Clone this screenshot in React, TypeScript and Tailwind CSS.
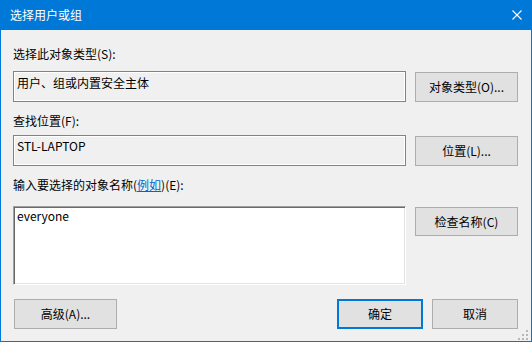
const font = { fontFamily: '"Noto Sans CJK SC", "Noto Sans", sans-serif' };

function Button({
  label,
  className = "",
  primary = false,
}: {
  label: React.ReactNode;
  className?: string;
  primary?: boolean;
}) {
  return (
    <button
      className={`flex items-center justify-center bg-[#e1e1e1] text-[12px] leading-[16px] text-black ${
        primary ? "border-2 border-[#0078d7]" : "border border-[#adadad]"
      } ${className}`}
    >
      {label}
    </button>
  );
}

function Grip() {
  const dots = [
    [8, 0],
    [4, 4],
    [8, 4],
    [0, 8],
    [4, 8],
    [8, 8],
  ];
  return (
    <svg className="absolute right-[3px] bottom-[1px]" width="10" height="10" viewBox="0 0 10 10">
      {dots.map(([x, y]) => (
        <rect key={`${x}-${y}`} x={x} y={y} width="2" height="2" fill="#b8b8b8" />
      ))}
    </svg>
  );
}

export default function App() {
  return (
    <div className="w-[532px] h-[342px] bg-[#0078d7] flex flex-col" style={font}>
      {/* title bar */}
      <div className="h-[30px] flex items-center justify-between pl-[10px] pr-[10px] text-white">
        <span className="text-[12px] leading-[16px]">选择用户或组</span>
        <svg width="10" height="10" viewBox="0 0 10 10" className="mr-[0px]">
          <path d="M0.5 0.5L9.5 9.5M9.5 0.5L0.5 9.5" stroke="#fff" strokeWidth="1.1" />
        </svg>
      </div>

      <div className="relative flex-1 mx-px mb-px bg-[#f0f0f0] pl-[12px] pr-[13px] pt-[16px] text-[12px] leading-[16px] text-black">
        <div className="h-[16px]">选择此对象类型(S):</div>
        <div className="mt-[9px] flex items-start">
          <div className="w-[393px] h-[31px] border border-[#838383] shadow-[inset_0_0_0_1px_#ffffff] pl-[3px] pt-[3px]">
            用户、组或内置安全主体
          </div>
          <Button label="对象类型(O)..." className="ml-[9px] mt-px w-[103px] h-[30px]" />
        </div>

        <div className="mt-[11px] h-[16px]">查找位置(F):</div>
        <div className="mt-[6px] flex items-start">
          <div className="w-[393px] h-[31px] border border-[#838383] shadow-[inset_0_0_0_1px_#ffffff] pl-[3px] pt-[2px]">
            STL-LAPTOP
          </div>
          <Button label="位置(L)..." className="ml-[9px] mt-px w-[103px] h-[30px]" />
        </div>

        <div className="mt-[11px] h-[16px]">
          输入要选择的对象名称(<span className="text-[#0066cc] underline">例如</span>)(E):
        </div>
        <div className="mt-[13px] flex items-start">
          <div className="w-[393px] h-[79px] bg-white border border-t-[#a0a0a0] border-l-[#a0a0a0] border-b-white border-r-white shadow-[inset_1px_1px_0_#696969,inset_-1px_-1px_0_#e3e3e3] pl-[3px] pt-[1px]">
            everyone
          </div>
          <Button label="检查名称(C)" className="ml-[9px] mt-px w-[103px] h-[29px]" />
        </div>

        <div className="mt-[14px] flex items-start">
          <Button label="高级(A)..." className="ml-px w-[103px] h-[30px]" />
          <div className="flex-1" />
          <Button label="确定" primary className="w-[86px] h-[30px]" />
          <Button label="取消" className="ml-[9px] w-[86px] h-[30px]" />
        </div>

        <Grip />
      </div>
    </div>
  );
}
